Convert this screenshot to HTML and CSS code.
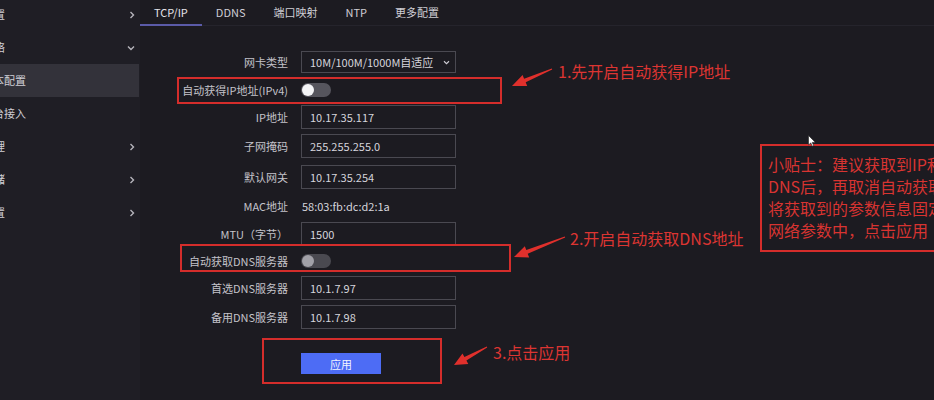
FILE: index.html
```html
<!DOCTYPE html>
<html lang="zh-CN">
<head>
<meta charset="utf-8">
<title>TCP/IP</title>
<link rel="stylesheet" href="styles.css">
</head>
<body>
<div class="app">
  <aside class="sidebar">
    <div class="nav-item"><span class="nav-text top">系统配置</span><svg class="chev" viewBox="0 0 6 8"><path d="M1.5 1 L4.5 4 L1.5 7"/></svg></div>
    <div class="nav-item"><span class="nav-text top">网络</span><svg class="chev" viewBox="0 0 8 6"><path d="M1 1.5 L4 4.5 L7 1.5"/></svg></div>
    <div class="nav-item active"><span class="nav-text sub">基本配置</span></div>
    <div class="nav-item"><span class="nav-text sub">平台接入</span></div>
    <div class="nav-item"><span class="nav-text top">存储管理</span><svg class="chev" viewBox="0 0 6 8"><path d="M1.5 1 L4.5 4 L1.5 7"/></svg></div>
    <div class="nav-item"><span class="nav-text top">事件存储</span><svg class="chev" viewBox="0 0 6 8"><path d="M1.5 1 L4.5 4 L1.5 7"/></svg></div>
    <div class="nav-item"><span class="nav-text top">安全配置</span><svg class="chev" viewBox="0 0 6 8"><path d="M1.5 1 L4.5 4 L1.5 7"/></svg></div>
  </aside>
  <main class="main">
    <nav class="tabs">
      <div class="tab active">TCP/IP</div>
      <div class="tab">DDNS</div>
      <div class="tab">端口映射</div>
      <div class="tab">NTP</div>
      <div class="tab">更多配置</div>
    </nav>
    <div class="form">
      <div class="label">网卡类型</div>
      <div class="field"><div class="select"><span>10M/100M/1000M自适应</span><svg class="sel-chev" viewBox="0 0 8 6"><path d="M1 1.5 L4 4.5 L7 1.5"/></svg></div></div>

      <div class="label">自动获得IP地址(IPv4)</div>
      <div class="field"><div class="toggle"><div class="knob"></div></div></div>

      <div class="label">IP地址</div>
      <div class="field"><div class="input">10.17.35.117</div></div>

      <div class="label">子网掩码</div>
      <div class="field"><div class="input">255.255.255.0</div></div>

      <div class="label">默认网关</div>
      <div class="field"><div class="input">10.17.35.254</div></div>

      <div class="label">MAC地址</div>
      <div class="field"><div class="plain">58:03:fb:dc:d2:1a</div></div>

      <div class="label">MTU（字节）</div>
      <div class="field"><div class="input">1500</div></div>

      <div class="label">自动获取DNS服务器</div>
      <div class="field"><div class="toggle dim"><div class="knob"></div></div></div>

      <div class="label">首选DNS服务器</div>
      <div class="field"><div class="input">10.1.7.97</div></div>

      <div class="label">备用DNS服务器</div>
      <div class="field"><div class="input">10.1.7.98</div></div>

      <div class="label"></div>
      <div class="field btn-row"><button class="btn">应用</button></div>
    </div>
  </main>
</div>

<div class="overlay">
  <div class="mark mark-1"></div>
  <div class="mark mark-2"></div>
  <div class="mark mark-3"></div>
  <div class="note note-1">1.先开启自动获得IP地址</div>
  <div class="note note-2">2.开启自动获取DNS地址</div>
  <div class="note note-3">3.点击应用</div>
  <div class="tip">小贴士：建议获取到IP和<br>DNS后，再取消自动获取<br>将获取到的参数信息固定<br>网络参数中，点击应用</div>
  <svg class="arrows" viewBox="0 0 934 400" width="934" height="400">
    <polygon points="551.8,68.5 524.1,78.7 522.6,75.0 512,86 527.2,86.0 525.7,82.3 552.2,69.5"/>
    <polygon points="564.8,236.5 526.3,250.0 524.8,246.3 514,257 529.2,257.5 527.7,253.8 565.2,237.5"/>
    <polygon points="486.8,346.6 464.4,357.0 462.5,353.5 454,365 468.3,364.1 466.4,360.6 487.2,347.4"/>
    <path class="cursor" d="M808.5 135.5 L808.5 145 L810.8 142.9 L812.3 146.2 L813.7 145.6 L812.2 142.4 L815.2 142.2 Z"/>
  </svg>
</div>
</body>
</html>
```

FILE: styles.css
```css
* { box-sizing: border-box; }

body {
  margin: 0;
  width: 934px;
  height: 400px;
  overflow: hidden;
  position: relative;
  background: #1c1b21;
  font-family: "Noto Sans CJK SC", "Noto Sans", sans-serif;
  font-size: 11px;
  color: #c9c8cf;
}

.app {
  display: flex;
  height: 400px;
}

.sidebar {
  width: 140px;
  flex: none;
  background: #1f1e25;
  padding-top: 0;
  overflow: hidden;
  display: flex;
  flex-direction: column;
}

.nav-item {
  height: 33px;
  display: flex;
  align-items: center;
  justify-content: space-between;
  padding-right: 5px;
  white-space: nowrap;
  color: #d0cfd6;
}
.nav-item:first-child { margin-top: -2px; }

.nav-item.active {
  background: #33323a;
  margin-right: 1px;
}

.nav-text { line-height: 1; }
.nav-text.top { margin-left: -39px; }
.nav-text.sub { margin-left: -18px; }
.nav-item:nth-child(2) .nav-text.top { margin-left: -17px; }

.chev {
  width: 6px;
  height: 8px;
  fill: none;
  stroke: #b6b5bc;
  stroke-width: 1.4;
}
.nav-item:nth-child(2) .chev { width: 8px; height: 6px; }

.main {
  flex: 1;
  display: flex;
  flex-direction: column;
}

.tabs {
  height: 26px;
  display: flex;
  border-bottom: 1px solid #25242c;
}

.tab {
  padding: 0 14px;
  display: flex;
  align-items: center;
  font-size: 11px;
  color: #cfced5;
  border-bottom: 2px solid transparent;
  margin-bottom: -1px;
}
.tab.active {
  color: #e4e3ea;
  border-bottom-color: #5b5ba8;
}

.form {
  display: grid;
  grid-template-columns: 148px 155px;
  grid-template-rows: 28px 27px 27px 31px 31px 28px 28px 26px 28px 30px 42px;
  column-gap: 13px;
  padding-top: 22px;
}

.label {
  display: flex;
  align-items: center;
  justify-content: flex-end;
  white-space: nowrap;
  color: #c4c3ca;
}

.field {
  display: flex;
  align-items: center;
}

.select, .input {
  width: 155px;
  height: 24px;
  border: 1px solid #4a4951;
  display: flex;
  align-items: center;
  padding-left: 8px;
  color: #d6d5dc;
}
.select {
  height: 22px;
  justify-content: space-between;
  padding-right: 5px;
}
.sel-chev {
  width: 7px;
  height: 5px;
  fill: none;
  stroke: #cfced5;
  stroke-width: 1.3;
}

.plain {
  padding-left: 1px;
  color: #d6d5dc;
}

.toggle {
  width: 30px;
  height: 14px;
  border-radius: 7px;
  background: #56555d;
  padding: 1px;
}
.knob {
  width: 12px;
  height: 12px;
  border-radius: 50%;
  background: #f4f4f6;
}
.toggle.dim { background: #4a4950; }
.toggle.dim .knob { background: #a2a1a8; }

.btn-row { align-items: flex-end; }
.btn {
  width: 80px;
  height: 21px;
  border: none;
  background: #4d6cf5;
  color: #f2f3ff;
  font-family: "Noto Sans CJK SC", sans-serif;
  font-size: 11px;
  padding: 0;
}

/* annotation overlay */
.overlay {
  position: absolute;
  inset: 0;
  pointer-events: none;
}

.mark {
  position: absolute;
  border: 2px solid #d42d2b;
}
.mark-1 { left: 177px; top: 77px; width: 325px; height: 27px; }
.mark-2 { left: 180px; top: 244px; width: 331px; height: 28px; }
.mark-3 { left: 262px; top: 338px; width: 180px; height: 46px; }

.note {
  position: absolute;
  font-size: 16px;
  line-height: 20px;
  color: #dc3532;
  white-space: nowrap;
}
.note-1 { left: 558px; top: 61px; }
.note-2 { left: 570px; top: 228px; }
.note-3 { left: 493px; top: 342px; }

.tip {
  position: absolute;
  left: 760px;
  top: 144px;
  width: 220px;
  height: 108px;
  border: 2px solid #d42d2b;
  padding: 7px 0 0 6px;
  font-size: 16px;
  line-height: 22px;
  color: #d83431;
  white-space: nowrap;
}

.arrows {
  position: absolute;
  left: 0;
  top: 0;
}
.arrows polygon { fill: #e0302c; }
.arrows .cursor { fill: #ffffff; stroke: #222; stroke-width: 0.6; }
```
